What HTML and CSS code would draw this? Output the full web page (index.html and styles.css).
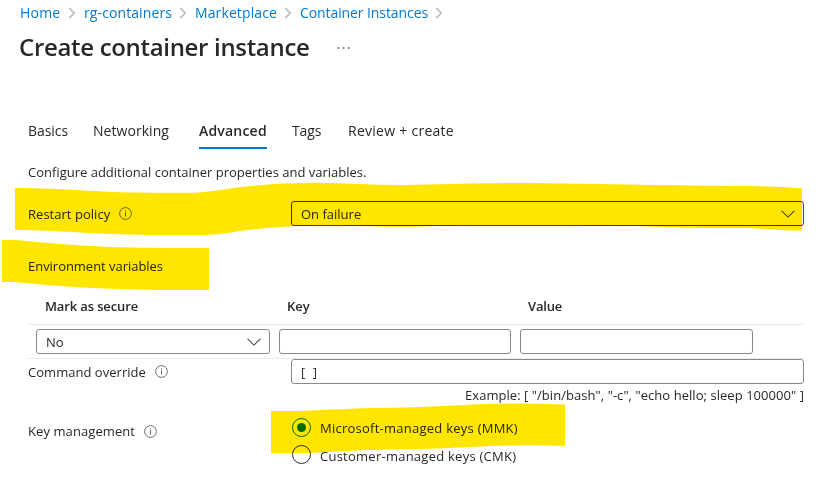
FILE: index.html
```html
<!DOCTYPE html>
<html lang="en">
<head>
<meta charset="utf-8">
<title>Create container instance</title>
<link rel="stylesheet" href="styles.css">
</head>
<body>
<svg class="symbols" width="0" height="0" aria-hidden="true">
  <symbol id="crumb" viewBox="0 0 8 12"><path d="M1.200 1l5 5-5 5" fill="none" stroke="#b4b2b0" stroke-width="1.4"/></symbol>
  <symbol id="info" viewBox="0 0 13 13"><circle cx="6.5" cy="6.5" r="5.9" fill="none" stroke="#605e5c" stroke-width=".9"/><path d="M6.5 5.3v4.2M6.5 3.3v1.1" stroke="#605e5c" stroke-width="1"/></symbol>
  <symbol id="down" viewBox="0 0 14 8"><path d="M.6.8L7 7.1 13.4.8" fill="none" stroke="#484644" stroke-width="1.1"/></symbol>
</svg>
<div class="page">
  <nav class="crumbs">
    <a class="crumb-home">Home</a><svg><use href="#crumb"/></svg>
    <a class="crumb-group">rg-containers</a><svg><use href="#crumb"/></svg>
    <a class="crumb-market">Marketplace</a><svg><use href="#crumb"/></svg>
    <a class="crumb-instances">Container Instances</a><svg><use href="#crumb"/></svg>
  </nav>
  <header class="heading">
    <h1>Create container instance</h1>
    <svg class="more" viewBox="0 0 13 2"><path d="M.5 1h1.500M5.800 1h1.500M11 1h1.500" stroke="#484644" stroke-width="1.4"/></svg>
  </header>
  <main>
    <div class="tabs">
      <span class="tab tab-basics">Basics</span>
      <span class="tab tab-networking">Networking</span>
      <span class="tab tab-active">Advanced</span>
      <span class="tab tab-tags">Tags</span>
      <span class="tab tab-review">Review + create</span>
    </div>
    <p class="intro">Configure additional container properties and variables.</p>
    <div class="field">
      <div class="label">Restart policy<svg><use href="#info"/></svg></div>
      <div class="input select changed">On failure<svg><use href="#down"/></svg></div>
    </div>
    <h2 class="section">Environment variables</h2>
    <div class="table">
      <div class="row head"><span class="mark">Mark as secure</span><span>Key</span><span class="value">Value</span></div>
      <div class="row">
        <div class="input select">No<svg><use href="#down"/></svg></div>
        <div class="input"></div>
        <div class="input"></div>
      </div>
    </div>
    <div class="field">
      <div class="label">Command override<svg><use href="#info"/></svg></div>
      <div class="input brackets">[ ]</div>
    </div>
    <p class="example">Example: [ "/bin/bash", "-c", "echo hello; sleep 100000" ]</p>
    <div class="field keys">
      <div class="label key-label">Key management<svg><use href="#info"/></svg></div>
      <div class="options">
        <div class="option"><span class="radio checked"></span>Microsoft-managed keys (MMK)</div>
        <div class="option"><span class="radio"></span>Customer-managed keys (CMK)</div>
      </div>
    </div>
  </main>
  <svg class="marker" viewBox="0 0 835 487" fill="#ffe600">
    <path d="M15 188C70 188 90 192.500 150 192.700H195C225 191 240 184 310 182.800C350 183 360 185 405 185C450 184.500 470 183 530 183C620 184 700 186 745 186C780 186.500 790 187.500 802 188.500V230.500H788C770 229.500 765 228 720 228C680 228 650 226 600 225.500C540 225 460 224.500 440 226C400 227.500 360 226.500 335 225C300 225 265 228 240 231C225 233.500 215 235 200 235H150C90 234.500 60 230 15 230Z"/>
    <path d="M2 240H15C50 243 60 244.500 110 247C150 248 170 248 209 248V290H160C100 289 70 287 40 284.500L15 282H2Z"/>
    <path d="M271 411H300C330 410 350 408 385 408C440 407 470 404 515 403.500C535 403.500 550 404 565 404.500V446C550 446 535 445 515 445.500C480 446 450 449 395 449.500C350 450 340 452 310 453H271Z"/>
  </svg>
</div>
</body>
</html>
```
FILE: styles.css
```css
* { box-sizing: border-box; }
body { margin: 0; background: #fff; color: #292827; font: 13px/20px "Open Sans", "Noto Sans", sans-serif; }
h1, h2, p { margin: 0; }
.symbols { position: absolute; }
.page { position: relative; isolation: isolate; width: 835px; height: 487px; background: #fff; overflow: hidden; }

.crumbs { display: flex; align-items: center; height: 20px; margin: 3px 0 0 20px; font-size: 14px; color: #0078d4; }
.crumbs svg { width: 8px; height: 12px; margin: 0 8px 0 7px; }
.crumb-home { width: 41px; letter-spacing: .2px; }
.crumb-group { width: 88px; letter-spacing: .1px; }
.crumb-market { width: 82px; letter-spacing: .11px; }
.crumb-instances { width: 128px; letter-spacing: -.09px; }

.heading { display: flex; align-items: center; height: 32px; margin: 8px 0 0 19px; }
h1 { width: 318px; font-size: 24px; line-height: 32px; font-weight: 600; letter-spacing: -.32px; white-space: nowrap; }
.more { width: 13px; height: 2px; margin-top: 1px; }

main { width: 776px; margin: 52px 0 0 28px; }
.tabs { display: flex; height: 34px; gap: 25px; font-size: 14px; line-height: 32px; white-space: nowrap; }
.tab { height: 34px; }
.tab-basics { width: 40px; letter-spacing: -.07px; }
.tab-networking { width: 81px; letter-spacing: .05px; }
.tab-active { width: 68px; font-weight: 600; letter-spacing: .2px; border-bottom: 2px solid #0078d4; }
.tab-tags { width: 31px; letter-spacing: -.15px; }
.tab-review { letter-spacing: .27px; }
.intro { margin: 13px 0 19px; }

.field { display: flex; align-items: center; }
.label { display: flex; align-items: center; gap: 9px; width: 263px; letter-spacing: .03px; }
.label svg { width: 13px; height: 13px; }
.input { flex: 1; display: flex; align-items: center; height: 25px; padding: 0 9px; border: 1px solid #8a8886; border-radius: 3px; background: #fff; }
.select { justify-content: space-between; }
.select svg { width: 14px; height: 8px; margin-right: -1px; }
.changed { border-color: #881798; }
.section { margin: 30px 0 10px; font: inherit; letter-spacing: -.03px; }

.row { display: grid; grid-template-columns: 234px 232px 233px; column-gap: 9px; height: 34px; padding: 4px 0 4px 8px; border-bottom: 1px solid #edebe9; }
.head { height: 39px; padding-top: 10px; font-weight: 600; }
.head span { padding-left: 8px; }
.head .mark { padding-left: 9px; letter-spacing: -.13px; }
.head .value { letter-spacing: -.18px; }
.brackets { word-spacing: 4px; }
.example { height: 22px; line-height: 22px; text-align: right; letter-spacing: .05px; }

.keys { align-items: flex-start; padding-top: 11px; }
.key-label { padding-top: 4px; letter-spacing: .08px; }
.options { display: flex; flex-direction: column; gap: 8px; padding: 1px 0 0 1px; }
.option { display: flex; align-items: flex-start; gap: 9px; height: 20px; letter-spacing: .25px; }
.radio { display: flex; align-items: center; justify-content: center; width: 19px; height: 19px; border: 1px solid #323130; border-radius: 50%; }
.option + .option .radio { margin-top: -1px; }
.checked { border-color: #0078d4; }
.checked::after { content: ""; width: 9px; height: 9px; border-radius: 50%; background: #0078d4; }

/* Highlighter strokes laid over the form */
.marker { position: absolute; inset: 0; width: 835px; height: 487px; mix-blend-mode: multiply; pointer-events: none; }
```
